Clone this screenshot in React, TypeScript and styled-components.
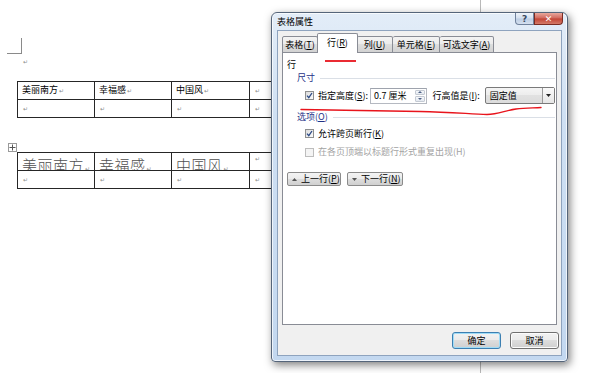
import styled, { createGlobalStyle } from "styled-components";

const GlobalStyle = createGlobalStyle`
  html, body { margin: 0; padding: 0; background: #fff; }
  body { font-family: "Noto Sans CJK SC", "Noto Sans", sans-serif; color: #000; }
`;

const Page = styled.div`
  position: relative;
  width: 600px;
  height: 373px;
  overflow: hidden;
  background: #fff;
  display: flex;
`;

/* ---------- word document ---------- */

const DocArea = styled.div`
  width: 481px;
  height: 373px;
  box-sizing: border-box;
  border-right: 1px solid #b9b9b9;
  padding: 38px 0 0 7px;
`;

const CornerMark = styled.div`
  width: 14px;
  height: 15px;
  border-right: 1px solid #8a8a8a;
  border-bottom: 1px solid #8a8a8a;
`;

const EmptyPara = styled.div`
  height: 14px;
  margin-left: 15px;
  display: flex;
  align-items: center;
`;

const Ret = styled.span`
  font-family: "DejaVu Sans", sans-serif;
  font-size: 6px;
  font-weight: normal;
  color: #8c8c8c;
  margin-left: 1px;
`;

const TableWrap = styled.div<{ $top: number }>`
  position: relative;
  margin: ${(p) => p.$top}px 0 0 10px;
`;

const MoveHandle = styled.div`
  position: absolute;
  left: -9px;
  top: -9px;
  width: 7px;
  height: 7px;
  border: 1px solid #9a9a9a;
  background: #fff;
  display: flex;
  align-items: center;
  justify-content: center;
`;

const DocTable = styled.table`
  border-collapse: collapse;
  table-layout: fixed;
`;

const Cell = styled.td<{ $w: number }>`
  width: ${(p) => p.$w}px;
  height: 18px;
  box-sizing: border-box;
  border: 1px solid #262626;
  padding: 0 0 0 4px;
  font-size: 9px;
  line-height: 12px;
  vertical-align: middle;
  white-space: nowrap;
  overflow: hidden;
`;

const ClipCell = styled.div`
  height: 17px;
  overflow: hidden;
  font-size: 15px;
  line-height: 15px;
  padding-top: 4px;
  box-sizing: border-box;
  color: #4f4f4f;
  font-weight: 300;
  letter-spacing: 0.5px;
`;

const TopMark = styled.div`
  height: 17px;
  padding-top: 1px;
  box-sizing: border-box;
  line-height: 8px;
`;

/* ---------- dialog ---------- */

const Dialog = styled.div`
  position: absolute;
  left: 271px;
  top: 12px;
  width: 297px;
  height: 350px;
  box-sizing: border-box;
  border: 1px solid #55657a;
  border-radius: 6px 6px 4px 4px;
  background: linear-gradient(180deg, #e3edf8 0%, #cfe0f3 30%, #c3d8f0 100%);
  box-shadow: inset 0 0 0 1px rgba(255, 255, 255, 0.7), 2px 3px 9px rgba(0, 0, 0, 0.5);
  display: flex;
  flex-direction: column;
  padding: 0 5px 5px 5px;
`;

const TitleBar = styled.div`
  height: 19px;
  display: flex;
  justify-content: space-between;
  align-items: flex-start;
`;

const Title = styled.div`
  font-size: 9px;
  line-height: 12px;
  margin-top: 3px;
`;

const CaptionButtons = styled.div`
  display: flex;
  margin-right: -1px;
`;

const CaptionButton = styled.div<{ $close?: boolean }>`
  width: ${(p) => (p.$close ? 29 : 19)}px;
  height: 12px;
  box-sizing: border-box;
  display: flex;
  align-items: center;
  justify-content: center;
  border: 1px solid ${(p) => (p.$close ? "#7a2c22" : "#6f819b")};
  border-top: none;
  border-radius: ${(p) => (p.$close ? "0 0 4px 0" : "0 0 0 4px")};
  background: ${(p) =>
    p.$close
      ? "linear-gradient(180deg, #e8a89c 0%, #d0675c 48%, #c24434 52%, #d47a68 100%)"
      : "linear-gradient(180deg, #eef3f9 0%, #d3dfee 48%, #bccde3 52%, #d4e0ef 100%)"};
  font-size: 9px;
  font-weight: bold;
  color: ${(p) => (p.$close ? "#fff" : "#3a4a60")};
  font-family: "DejaVu Sans", sans-serif;
`;

const Client = styled.div`
  flex: 1;
  background: #f0f0f0;
  border: 1px solid #8ea3be;
  padding: 2px 4px 6px 4px;
  display: flex;
  flex-direction: column;
`;

const TabBar = styled.div`
  display: flex;
  align-items: flex-end;
  height: 20px;
  margin-bottom: -1px;
  position: relative;
  z-index: 2;
`;

const Tab = styled.div<{ $w: number; $active?: boolean }>`
  width: ${(p) => p.$w}px;
  height: ${(p) => (p.$active ? 20 : 17)}px;
  box-sizing: border-box;
  margin-left: ${(p) => (p.$active ? -1 : 0)}px;
  margin-right: ${(p) => (p.$active ? -1 : 0)}px;
  border: 1px solid #898c95;
  border-bottom: ${(p) => (p.$active ? "none" : "1px solid #898c95")};
  border-left: ${(p) => (p.$active ? "1px solid #898c95" : "none")};
  border-radius: 2px 2px 0 0;
  background: ${(p) =>
    p.$active ? "#fff" : "linear-gradient(180deg, #f3f3f3 0%, #ebebeb 50%, #dedede 50%, #d2d2d2 100%)"};
  position: relative;
  z-index: ${(p) => (p.$active ? 3 : 1)};
  font-size: 9px;
  line-height: 12px;
  display: flex;
  justify-content: center;
  white-space: nowrap;
  padding-top: ${(p) => (p.$active ? 3 : 2)}px;
  &:first-child {
    border-left: 1px solid #898c95;
  }
`;

const Panel = styled.div`
  height: 273px;
  box-sizing: border-box;
  background: #fff;
  border: 1px solid #898c95;
  display: flex;
  flex-direction: column;
  padding: 6px 1px 0 4px;
`;

const Key = styled.span`
  text-decoration: underline;
  text-underline-offset: 1px;
`;

const Heading = styled.div`
  font-size: 9px;
  line-height: 12px;
`;

const GroupHeader = styled.div<{ $gap: number }>`
  display: flex;
  align-items: center;
  gap: 5px;
  margin: ${(p) => p.$gap}px 0 0 10px;
  font-size: 9px;
  line-height: 12px;
  color: #1e3287;
`;

const Nowrap = styled.span`
  white-space: nowrap;
`;

const Rule = styled.div`
  flex: 1;
  height: 1px;
  background: #dadfe6;
`;

const FieldRow = styled.div<{ $gap: number; $disabled?: boolean }>`
  display: flex;
  align-items: center;
  height: ${(p) => (p.$disabled ? 12 : 17)}px;
  margin: ${(p) => p.$gap}px 0 0 18px;
  font-size: 9px;
  line-height: 12px;
  color: ${(p) => (p.$disabled ? "#a3a3a3" : "#000")};
  white-space: nowrap;
`;

const CheckBox = styled.div<{ $disabled?: boolean }>`
  width: 9px;
  height: 9px;
  box-sizing: border-box;
  border: 1px solid ${(p) => (p.$disabled ? "#bdbdbd" : "#8e8f8f")};
  background: ${(p) => (p.$disabled ? "#f4f4f4" : "linear-gradient(135deg, #dcdcdc, #fbfbfb)")};
  margin-right: 4px;
  display: flex;
  align-items: center;
  justify-content: center;
`;

const SpinBox = styled.div`
  width: 58px;
  height: 16px;
  box-sizing: border-box;
  margin-left: 2px;
  border: 1px solid #b5b9c1;
  border-top-color: #9ea3ad;
  display: flex;
  background: #fff;
`;

const SpinValue = styled.div`
  flex: 1;
  padding-left: 3px;
  line-height: 14px;
`;

const SpinArrows = styled.div`
  width: 10px;
  display: flex;
  flex-direction: column;
  gap: 1px;
  padding: 1px 1px 1px 0;
`;

const SpinArrow = styled.div`
  flex: 1;
  border: 1px solid #c4cad3;
  border-radius: 1px;
  background: linear-gradient(180deg, #f6f8fb, #e4e9f0);
  display: flex;
  align-items: center;
  justify-content: center;
`;

const InlineLabel = styled.span<{ $left: number }>`
  margin-left: ${(p) => p.$left}px;
`;

const Select = styled.div`
  width: 72px;
  height: 17px;
  box-sizing: border-box;
  margin-left: 5px;
  border: 1px solid #7a7a7a;
  border-radius: 2px;
  background: linear-gradient(180deg, #f5f5f5 0%, #ececec 50%, #e1e1e1 50%, #dcdcdc 100%);
  display: flex;
`;

const SelectValue = styled.div`
  flex: 1;
  padding-left: 4px;
  line-height: 15px;
`;

const SelectArrow = styled.div`
  width: 11px;
  border-left: 1px solid #9a9a9a;
  background: linear-gradient(180deg, #fafafa, #e6e6e6);
  display: flex;
  align-items: center;
  justify-content: center;
`;

const NavRow = styled.div`
  display: flex;
  gap: 6px;
  margin-top: 14px;
`;

const NavButton = styled.div<{ $w: number }>`
  width: ${(p) => p.$w}px;
  height: 14px;
  box-sizing: border-box;
  border: 1px solid #8b8b8b;
  border-radius: 2px;
  background: linear-gradient(180deg, #f4f4f4 0%, #ebebeb 50%, #dddddd 50%, #d0d0d0 100%);
  display: flex;
  align-items: center;
  gap: 4px;
  padding-left: 4px;
  font-size: 9px;
  line-height: 12px;
  white-space: nowrap;
`;

const Footer = styled.div`
  display: flex;
  justify-content: flex-end;
  gap: 9px;
  margin: 7px -2px 0 0;
`;

const DialogButton = styled.div<{ $primary?: boolean }>`
  width: 49px;
  height: 17px;
  box-sizing: border-box;
  border: 1px solid ${(p) => (p.$primary ? "#3c7fb1" : "#707070")};
  border-radius: 3px;
  background: linear-gradient(180deg, #f2f2f2 0%, #ebebeb 50%, #dddddd 50%, #cfcfcf 100%);
  box-shadow: ${(p) => (p.$primary ? "inset 0 0 0 1px #9fdcf7" : "inset 0 0 0 1px #fcfcfc")};
  display: flex;
  align-items: center;
  justify-content: center;
  font-size: 9px;
  line-height: 12px;
`;

const Annotation = styled.svg`
  position: absolute;
  left: 0;
  top: 0;
  pointer-events: none;
  z-index: 10;
`;

function Check() {
  return (
    <svg width="7" height="7" viewBox="0 0 7 7">
      <path d="M1 3.6 L2.8 5.6 L6 1" fill="none" stroke="#2c4a86" strokeWidth="1.3" />
    </svg>
  );
}

function Tri({ up, size = 5, color = "#222" }: { up?: boolean; size?: number; color?: string }) {
  const h = Math.round(size * 0.6);
  return (
    <svg width={size} height={h} viewBox={`0 0 ${size} ${h}`}>
      <polygon
        points={up ? `0,${h} ${size},${h} ${size / 2},0` : `0,0 ${size},0 ${size / 2},${h}`}
        fill={color}
      />
    </svg>
  );
}

const plain = [
  { text: "美丽南方", w: 77 },
  { text: "幸福感", w: 77 },
  { text: "中国风", w: 78 },
];

export default function App() {
  return (
    <Page>
      <GlobalStyle />
      <DocArea>
        <CornerMark />
        <EmptyPara>
          <Ret>↵</Ret>
        </EmptyPara>

        <TableWrap $top={13}>
          <DocTable>
            <tbody>
              <tr>
                {plain.map((c) => (
                  <Cell key={c.text} $w={c.w}>
                    {c.text}
                    <Ret>↵</Ret>
                  </Cell>
                ))}
                <Cell $w={60}>
                  <Ret>↵</Ret>
                </Cell>
              </tr>
              <tr>
                {plain.map((c) => (
                  <Cell key={c.text} $w={c.w}>
                    <Ret>↵</Ret>
                  </Cell>
                ))}
                <Cell $w={60}>
                  <Ret>↵</Ret>
                </Cell>
              </tr>
            </tbody>
          </DocTable>
        </TableWrap>

        <TableWrap $top={34}>
          <MoveHandle>
            <svg width="7" height="7" viewBox="0 0 7 7">
              <path d="M3.5 0.5 V6.5 M0.5 3.5 H6.5" stroke="#555" strokeWidth="1" />
            </svg>
          </MoveHandle>
          <DocTable>
            <tbody>
              <tr>
                {plain.map((c) => (
                  <Cell key={c.text} $w={c.w}>
                    <ClipCell>
                      {c.text}
                      <Ret>↵</Ret>
                    </ClipCell>
                  </Cell>
                ))}
                <Cell $w={60}>
                  <TopMark>
                    <Ret>↵</Ret>
                  </TopMark>
                </Cell>
              </tr>
              <tr>
                {plain.map((c) => (
                  <Cell key={c.text} $w={c.w}>
                    <Ret>↵</Ret>
                  </Cell>
                ))}
                <Cell $w={60}>
                  <Ret>↵</Ret>
                </Cell>
              </tr>
            </tbody>
          </DocTable>
        </TableWrap>
      </DocArea>

      <Dialog>
        <TitleBar>
          <Title>表格属性</Title>
          <CaptionButtons>
            <CaptionButton>?</CaptionButton>
            <CaptionButton $close>✕</CaptionButton>
          </CaptionButtons>
        </TitleBar>
        <Client>
          <TabBar>
            <Tab $w={36}>
              <Nowrap>
                表格(<Key>T</Key>)
              </Nowrap>
            </Tab>
            <Tab $w={41} $active>
              <Nowrap>
                行(<Key>R</Key>)
              </Nowrap>
            </Tab>
            <Tab $w={36}>
              <Nowrap>
                列(<Key>U</Key>)
              </Nowrap>
            </Tab>
            <Tab $w={47}>
              <Nowrap>
                单元格(<Key>E</Key>)
              </Nowrap>
            </Tab>
            <Tab $w={54}>
              <Nowrap>
                可选文字(<Key>A</Key>)
              </Nowrap>
            </Tab>
          </TabBar>
          <Panel>
            <Heading>行</Heading>
            <GroupHeader $gap={1}>
              <Nowrap>尺寸</Nowrap>
              <Rule />
            </GroupHeader>
            <FieldRow $gap={3}>
              <CheckBox>
                <Check />
              </CheckBox>
              <Nowrap>
                指定高度(<Key>S</Key>):
              </Nowrap>
              <SpinBox>
                <SpinValue>0.7 厘米</SpinValue>
                <SpinArrows>
                  <SpinArrow>
                    <Tri up size={4} color="#4d6185" />
                  </SpinArrow>
                  <SpinArrow>
                    <Tri size={4} color="#4d6185" />
                  </SpinArrow>
                </SpinArrows>
              </SpinBox>
              <InlineLabel $left={6}>
                行高值是(<Key>I</Key>):
              </InlineLabel>
              <Select>
                <SelectValue>固定值</SelectValue>
                <SelectArrow>
                  <Tri size={5} />
                </SelectArrow>
              </Select>
            </FieldRow>
            <GroupHeader $gap={7}>
              <Nowrap>
                选项(<Key>O</Key>)
              </Nowrap>
              <Rule />
            </GroupHeader>
            <FieldRow $gap={2}>
              <CheckBox>
                <Check />
              </CheckBox>
              <Nowrap>
                允许跨页断行(<Key>K</Key>)
              </Nowrap>
            </FieldRow>
            <FieldRow $gap={4} $disabled>
              <CheckBox $disabled />
              <Nowrap>在各页顶端以标题行形式重复出现(H)</Nowrap>
            </FieldRow>
            <NavRow>
              <NavButton $w={54}>
                <Tri up size={5} color="#555" />
                <Nowrap>
                  上一行(<Key>P</Key>)
                </Nowrap>
              </NavButton>
              <NavButton $w={56}>
                <Tri size={5} color="#555" />
                <Nowrap>
                  下一行(<Key>N</Key>)
                </Nowrap>
              </NavButton>
            </NavRow>
          </Panel>
          <Footer>
            <DialogButton $primary>确定</DialogButton>
            <DialogButton>取消</DialogButton>
          </Footer>
        </Client>
      </Dialog>

      <Annotation width="600" height="373" viewBox="0 0 600 373">
        <path d="M325 61 L356 61" stroke="#e8141c" strokeWidth="1.8" fill="none" />
        <path
          d="M301 109.5 C 340 110, 390 111, 420 111.5 C 450 112, 470 114, 487 114.5 C 498 114.5, 505 110.5, 516 109 C 525 108, 533 108, 541 107.5"
          stroke="#e8141c"
          strokeWidth="1.4"
          fill="none"
          strokeLinecap="round"
        />
      </Annotation>
    </Page>
  );
}
